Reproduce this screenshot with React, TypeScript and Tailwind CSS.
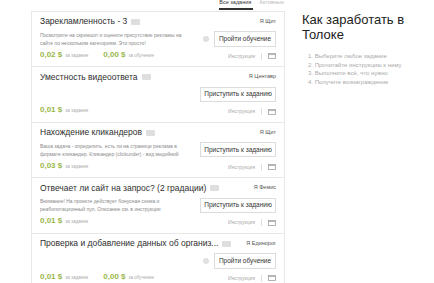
import React from "react";

type Task = {
  title: string;
  requester: string;
  desc?: string[];
  price: string;
  training?: string;
  action: "train" | "start";
};

const tasks: Task[] = [
  {
    title: "Зарекламленность - 3",
    requester: "Я Щит",
    desc: [
      "Посмотрите на скриншот и оцените присутствие рекламы на",
      "сайте по нескольким категориям. Это просто!",
    ],
    price: "0,02 $",
    training: "0,00 $",
    action: "train",
  },
  {
    title: "Уместность видеоответа",
    requester: "Я Центавр",
    price: "0,01 $",
    action: "start",
  },
  {
    title: "Нахождение кликандеров",
    requester: "Я Щит",
    desc: [
      "Ваша задача - определить, есть ли на странице реклама в",
      "формате кликандер. Кликандер (clickunder) - вид медийной",
    ],
    price: "0,03 $",
    action: "start",
  },
  {
    title: "Отвечает ли сайт на запрос? (2 градации)",
    requester: "Я Фемис",
    desc: [
      "Внимание! На проекте действует бонусная схема и",
      "реабилитационный пул. Описание см. в инструкции",
    ],
    price: "0,01 $",
    action: "start",
  },
  {
    title: "Проверка и добавление данных об организ...",
    requester: "Я Единорог",
    price: "0,01 $",
    training: "0,00 $",
    action: "train",
  },
];

const steps = [
  "Выберите любое задание",
  "Прочитайте инструкцию к нему",
  "Выполните всё, что нужно",
  "Получите вознаграждение",
];

function MailIcon() {
  return (
    <svg width="8" height="6" viewBox="0 0 8 6" className="block">
      <rect x="0.5" y="0.5" width="7" height="5" fill="none" stroke="#a0a0a0" strokeWidth="0.8" />
      <path d="M0.5 1.6 H7.5" stroke="#a0a0a0" strokeWidth="0.8" />
    </svg>
  );
}

function TaskRow({ task }: { task: Task }) {
  return (
    <div className="border-b border-[#e8e8e8] px-[8px] pt-[5px] pb-[6px]">
      <div className="flex h-[10px] items-center justify-between">
        <div className="flex items-center gap-[4px]">
          <span className="text-[8.5px] leading-none text-[#2e2e2e]">{task.title}</span>
          <span className="h-[6px] w-[9px] rounded-[1px] bg-[#dedede]" />
        </div>
        <span className="text-[5.5px] leading-none text-[#555]">{task.requester}</span>
      </div>
      <div className="mt-[4px] flex h-[16px] items-center justify-between">
        <div className="flex flex-col gap-[2px] self-start pt-[1px] text-[5px] leading-[6px] text-[#8a8a8a]">
          {task.desc?.map((d) => (
            <span key={d}>{d}</span>
          ))}
        </div>
        <div className="flex items-center gap-[5px]">
          {task.action === "train" && (
            <span className="h-[6px] w-[6px] rounded-full bg-[#e0e0e0]" />
          )}
          <button
            className={
              task.action === "train"
                ? "flex h-[16px] w-[62px] items-center justify-center border border-[#dcdcdc] bg-white text-[6.5px] text-[#333]"
                : "flex h-[15px] w-[76px] items-center justify-center border border-[#dcdcdc] bg-white text-[6.5px] text-[#333]"
            }
          >
            {task.action === "train" ? "Пройти обучение" : "Приступить к заданию"}
          </button>
        </div>
      </div>
      <div className="mt-[3px] flex items-center justify-between">
        <div className="flex items-baseline gap-[3px]">
          <span className="text-[8px] font-bold leading-[10px] text-[#9ab84a]">{task.price}</span>
          <span className="text-[4.5px] text-[#aaa]">за задание</span>
          {task.training && (
            <>
              <span className="ml-[12px] text-[8px] font-bold leading-[10px] text-[#9ab84a]">
                {task.training}
              </span>
              <span className="text-[4.5px] text-[#aaa]">за обучение</span>
            </>
          )}
        </div>
        <div className="flex items-center gap-[6px] pt-[3px]">
          <span className="text-[5px] text-[#aaa]">Инструкция</span>
          <span className="h-[7px] w-px bg-[#e0e0e0]" />
          <MailIcon />
        </div>
      </div>
    </div>
  );
}

export default function App() {
  return (
    <div className="flex h-[283px] w-[434px] overflow-hidden bg-white font-['Liberation_Sans',Arial,sans-serif]">
      <div className="ml-[31px] flex w-[254px] flex-col">
        <div className="flex h-[15px] justify-end gap-[6px] pr-[1px]">
          <div className="flex flex-col justify-end pb-[1px]">
            <span className="text-[5.5px] leading-none text-[#333]">Все задания</span>
            <span className="mt-[2px] h-[2px] w-[34px] bg-[#333]" />
          </div>
          <div className="flex flex-col justify-end pb-[5px]">
            <span className="text-[5.5px] leading-none text-[#bbb]">Активные</span>
          </div>
        </div>
        <div className="border-x border-t border-[#e8e8e8] bg-white">
          {tasks.map((t) => (
            <TaskRow key={t.title} task={t} />
          ))}
        </div>
      </div>
      <div className="ml-[17px] flex flex-col pt-[12px]">
        <h2 className="text-[13px] leading-[15px] text-[#222]">
          Как заработать в
          <br />
          Толоке
        </h2>
        <ol className="mt-[11px] flex flex-col gap-[2px] pl-[6px] text-[6px] leading-[6.6px] text-[#aaa]">
          {steps.map((s, i) => (
            <li key={s}>
              {i + 1}. {s}
            </li>
          ))}
        </ol>
      </div>
    </div>
  );
}
